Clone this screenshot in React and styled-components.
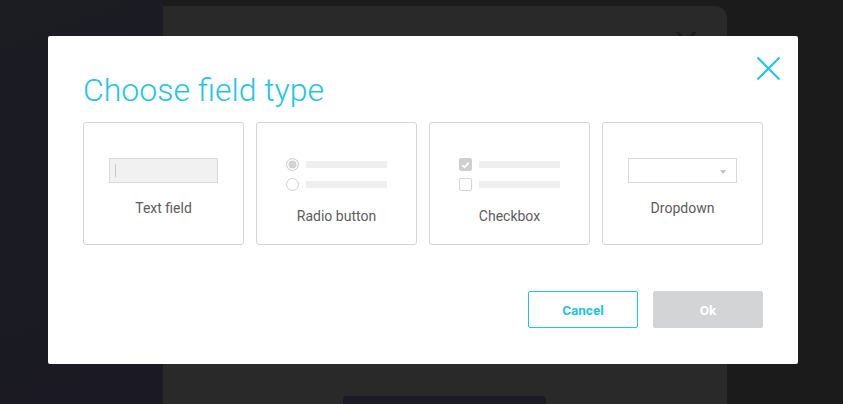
import styled, { createGlobalStyle } from "styled-components";

const GlobalStyle = createGlobalStyle`
  html, body {
    margin: 0;
    padding: 0;
    height: 100%;
    background: #1b1b1b;
    font-family: Roboto, "Liberation Sans", sans-serif;
  }
  #root {
    height: 100%;
  }
`;

const CYAN = "#1cc5e9";

const Page = styled.div`
  display: flex;
  height: 100vh;
  overflow: hidden;
`;

const Sidebar = styled.div`
  width: 163px;
  flex-shrink: 0;
  background: linear-gradient(160deg, #1b1d23 0%, #1b1a24 100%);
`;

const Main = styled.div`
  width: 564px;
  margin-top: 6px;
  flex-shrink: 0;
  background: #292929;
  border-top-right-radius: 12px;
  display: flex;
  flex-direction: column;
`;

const MainHeader = styled.div`
  display: flex;
  justify-content: flex-end;
  padding: 24px 30px 0 0;
  color: #1d1d1d;
`;

const MainFooter = styled.div`
  margin: auto 0 0 180px;
  width: 203px;
  height: 8px;
  background: #1c1b25;
  border-radius: 4px 4px 0 0;
`;

const Overlay = styled.div`
  position: fixed;
  inset: 0;
`;

const Modal = styled.div`
  position: absolute;
  left: 48px;
  top: 36px;
  width: 750px;
  height: 328px;
  box-sizing: border-box;
  background: #fff;
  border-radius: 2px;
  padding: 38px 35px 36px;
  display: flex;
  flex-direction: column;
`;

const CloseButton = styled.button`
  position: absolute;
  top: 20px;
  right: 17px;
  width: 25px;
  height: 25px;
  padding: 0;
  border: none;
  background: none;
  cursor: pointer;
  display: flex;
`;

const Title = styled.h1`
  margin: 0;
  font-size: 32px;
  line-height: 32px;
  font-weight: 300;
  color: ${CYAN};
`;

const Cards = styled.div`
  margin-top: 16px;
  display: grid;
  grid-template-columns: repeat(4, 161px);
  gap: 12px;
`;

const Card = styled.div`
  height: 123px;
  box-sizing: border-box;
  border: 1px solid #d4d4d4;
  border-radius: 3px;
  padding-top: 35px;
  display: flex;
  flex-direction: column;
  align-items: center;
  gap: 17px;
  cursor: pointer;
`;

const Label = styled.div`
  font-size: 14px;
  line-height: 16px;
  color: #5c5c5c;
`;

const FakeInput = styled.div`
  width: 109px;
  height: 25px;
  box-sizing: border-box;
  border: 1px solid #d9d9d9;
  background: ${(p) => (p.$filled ? "#f1f1f1" : "#fff")};
  display: flex;
  align-items: center;
  justify-content: ${(p) => (p.$filled ? "flex-start" : "flex-end")};
  padding: 0 10px 0 5px;
`;

const Caret = styled.span`
  width: 1px;
  height: 13px;
  background: #c8c8c8;
`;

const Arrow = styled.span`
  width: 0;
  height: 0;
  border-left: 3px solid transparent;
  border-right: 3px solid transparent;
  border-top: 4px solid #c4c4c4;
  margin-top: 2px;
`;

const OptionList = styled.div`
  display: flex;
  flex-direction: column;
  gap: 7px;
`;

const OptionRow = styled.div`
  display: flex;
  align-items: center;
  gap: 7px;
`;

const Radio = styled.span`
  width: 13px;
  height: 13px;
  box-sizing: border-box;
  border-radius: 50%;
  border: 1px solid #d2d2d2;
  background: ${(p) => (p.$checked ? "#d2d2d2" : "#fff")};
  box-shadow: ${(p) => (p.$checked ? "inset 0 0 0 1.5px #fff" : "none")};
`;

const Check = styled.span`
  width: 13px;
  height: 13px;
  box-sizing: border-box;
  border-radius: 2px;
  border: 1px solid ${(p) => (p.$checked ? "#cfcfcf" : "#d6d6d6")};
  background: ${(p) => (p.$checked ? "#cfcfcf" : "#fff")};
  display: flex;
  align-items: center;
  justify-content: center;
`;

const Line = styled.span`
  width: 81px;
  height: 7px;
  background: #efefef;
`;

const Actions = styled.div`
  margin-top: auto;
  display: flex;
  justify-content: flex-end;
  gap: 15px;
`;

const Button = styled.button`
  width: 110px;
  height: 37px;
  box-sizing: border-box;
  border-radius: 2px;
  font-family: Roboto, "Liberation Sans", sans-serif;
  font-size: 13.5px;
  font-weight: 700;
  cursor: pointer;
  border: 1px solid ${(p) => (p.$primary ? "#d3d4d6" : CYAN)};
  background: ${(p) => (p.$primary ? "#d3d4d6" : "#fff")};
  color: ${(p) => (p.$primary ? "#fff" : CYAN)};
`;

function Options({ kind }) {
  const Mark = kind === "radio" ? Radio : Check;
  return (
    <OptionList>
      {[true, false].map((checked, i) => (
        <OptionRow key={i}>
          <Mark $checked={checked}>
            {kind === "check" && checked && (
              <svg width="9" height="8" viewBox="0 0 9 8">
                <path d="M1.2 4.2 L3.5 6.3 L7.8 1.6" fill="none" stroke="#fff" strokeWidth="1.8" />
              </svg>
            )}
          </Mark>
          <Line />
        </OptionRow>
      ))}
    </OptionList>
  );
}

export default function App() {
  return (
    <>
      <GlobalStyle />
      <Page>
        <Sidebar />
        <Main>
          <MainHeader>
            <svg width="22" height="22" viewBox="0 0 22 22">
              <path d="M2 2 L20 20 M20 2 L2 20" stroke="currentColor" strokeWidth="3" />
            </svg>
          </MainHeader>
          <MainFooter />
        </Main>
      </Page>
      <Overlay>
        <Modal>
          <CloseButton aria-label="Close">
            <svg width="25" height="25" viewBox="0 0 25 25">
              <path d="M1.5 1.5 L23.5 23.5 M23.5 1.5 L1.5 23.5" stroke={CYAN} strokeWidth="2" />
            </svg>
          </CloseButton>
          <Title>Choose field type</Title>
          <Cards>
            <Card>
              <FakeInput $filled>
                <Caret />
              </FakeInput>
              <Label>Text field</Label>
            </Card>
            <Card>
              <Options kind="radio" />
              <Label>Radio button</Label>
            </Card>
            <Card>
              <Options kind="check" />
              <Label>Checkbox</Label>
            </Card>
            <Card>
              <FakeInput>
                <Arrow />
              </FakeInput>
              <Label>Dropdown</Label>
            </Card>
          </Cards>
          <Actions>
            <Button>Cancel</Button>
            <Button $primary>Ok</Button>
          </Actions>
        </Modal>
      </Overlay>
    </>
  );
}
